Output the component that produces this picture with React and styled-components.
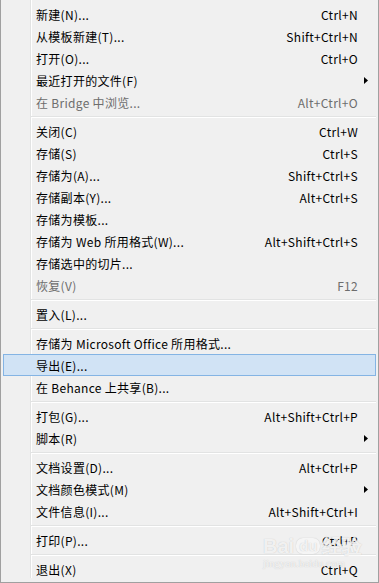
import React from "react";
import styled, { createGlobalStyle } from "styled-components";

const GlobalStyle = createGlobalStyle`
  html, body {
    margin: 0;
    padding: 0;
    background: #f0f0f0;
  }
  body {
    font-family: "Noto Sans CJK SC", "Microsoft YaHei", sans-serif;
  }
`;

const groups = [
  [
    { label: "新建(N)...", keys: "Ctrl+N" },
    { label: "从模板新建(T)...", keys: "Shift+Ctrl+N" },
    { label: "打开(O)...", keys: "Ctrl+O" },
    { label: "最近打开的文件(F)", sub: true },
    { label: "在 Bridge 中浏览...", keys: "Alt+Ctrl+O", disabled: true },
  ],
  [
    { label: "关闭(C)", keys: "Ctrl+W" },
    { label: "存储(S)", keys: "Ctrl+S" },
    { label: "存储为(A)...", keys: "Shift+Ctrl+S" },
    { label: "存储副本(Y)...", keys: "Alt+Ctrl+S" },
    { label: "存储为模板..." },
    { label: "存储为 Web 所用格式(W)...", keys: "Alt+Shift+Ctrl+S" },
    { label: "存储选中的切片..." },
    { label: "恢复(V)", keys: "F12", disabled: true },
  ],
  [{ label: "置入(L)..." }],
  [
    { label: "存储为 Microsoft Office 所用格式..." },
    { label: "导出(E)...", active: true },
    { label: "在 Behance 上共享(B)..." },
  ],
  [
    { label: "打包(G)...", keys: "Alt+Shift+Ctrl+P" },
    { label: "脚本(R)", sub: true },
  ],
  [
    { label: "文档设置(D)...", keys: "Alt+Ctrl+P" },
    { label: "文档颜色模式(M)", sub: true },
    { label: "文件信息(I)...", keys: "Alt+Shift+Ctrl+I" },
  ],
  [{ label: "打印(P)...", keys: "Ctrl+P" }],
  [{ label: "退出(X)", keys: "Ctrl+Q" }],
];

const App = () => {
  return (
    <>
      <GlobalStyle />
      <Menu>
        {groups.map((items, gi) => (
          <React.Fragment key={gi}>
            {gi > 0 && <Separator />}
            {items.map(item => (
              <Row key={item.label} $active={item.active} $disabled={item.disabled}>
                <Label>{item.label}</Label>
                <Keys>{item.keys}</Keys>
                <ArrowCell>
                  {item.sub && (
                    <svg width="4" height="7" viewBox="0 0 4 7">
                      <polygon points="0,0 4,3.5 0,7" fill="#000" />
                    </svg>
                  )}
                </ArrowCell>
              </Row>
            ))}
          </React.Fragment>
        ))}
        <Watermark>
          <Brand>
            Bai<Paw>du</Paw>经验
          </Brand>
          <Site>jingyan.baidu.com</Site>
        </Watermark>
      </Menu>
    </>
  );
};

export default App;

const Menu = styled.div`
  position: relative;
  box-sizing: border-box;
  width: 379px;
  height: 583px;
  padding-top: 3px;
  border-left: 1px solid #a0a0a0;
  border-right: 1px solid #a0a0a0;
  border-bottom: 1px solid #a0a0a0;
  background:
    linear-gradient(#e2e3e3, #e2e3e3) 29px 0 / 1px 578px no-repeat,
    linear-gradient(#ffffff, #ffffff) 30px 0 / 1px 578px no-repeat,
    #f0f0f0;
  font-size: 12px;
  letter-spacing: 0.3px;
  color: #000;
`;

const Row = styled.div`
  box-sizing: border-box;
  height: 22px;
  display: flex;
  align-items: center;
  margin: 0 2px;
  padding-left: 32px;
  border: 1px solid ${p => (p.$active ? "#84b4e4" : "transparent")};
  background: ${p => (p.$active ? "#d1e3f5" : "transparent")};
  color: ${p => (p.$disabled ? "#6d6d6d" : "#000")};
  white-space: nowrap;
`;

const Label = styled.div`
  flex: 1;
`;

const Keys = styled.div`
  text-align: right;
`;

const ArrowCell = styled.div`
  width: 17px;
  display: flex;
  justify-content: flex-end;
  padding-right: 7px;
  box-sizing: border-box;
`;

const Separator = styled.div`
  height: 7px;
  margin-left: 30px;
  margin-right: 2px;
  background:
    linear-gradient(#e2e3e3, #e2e3e3) 0 3px / 100% 1px no-repeat,
    linear-gradient(#ffffff, #ffffff) 0 4px / 100% 1px no-repeat;
`;

const Watermark = styled.div`
  position: absolute;
  left: 262px;
  top: 535px;
  display: flex;
  flex-direction: column;
  align-items: flex-start;
  color: rgba(255, 255, 255, 0.8);
  text-shadow: 0 0 1px rgba(110, 110, 110, 0.4);
  letter-spacing: 0;
  pointer-events: none;
`;

const Brand = styled.div`
  display: flex;
  align-items: center;
  gap: 2px;
  font-family: "Liberation Sans", Arial, sans-serif;
  font-weight: bold;
  font-size: 20px;
  line-height: 22px;
`;

const Paw = styled.span`
  font-size: 15px;
  line-height: 16px;
  padding: 0 3px;
  border-radius: 7px;
  background: rgba(255, 255, 255, 0.35);
  box-shadow: 0 0 1px rgba(110, 110, 110, 0.4);
`;

const Site = styled.div`
  font-family: "Liberation Serif", serif;
  font-size: 11px;
  line-height: 12px;
`;
